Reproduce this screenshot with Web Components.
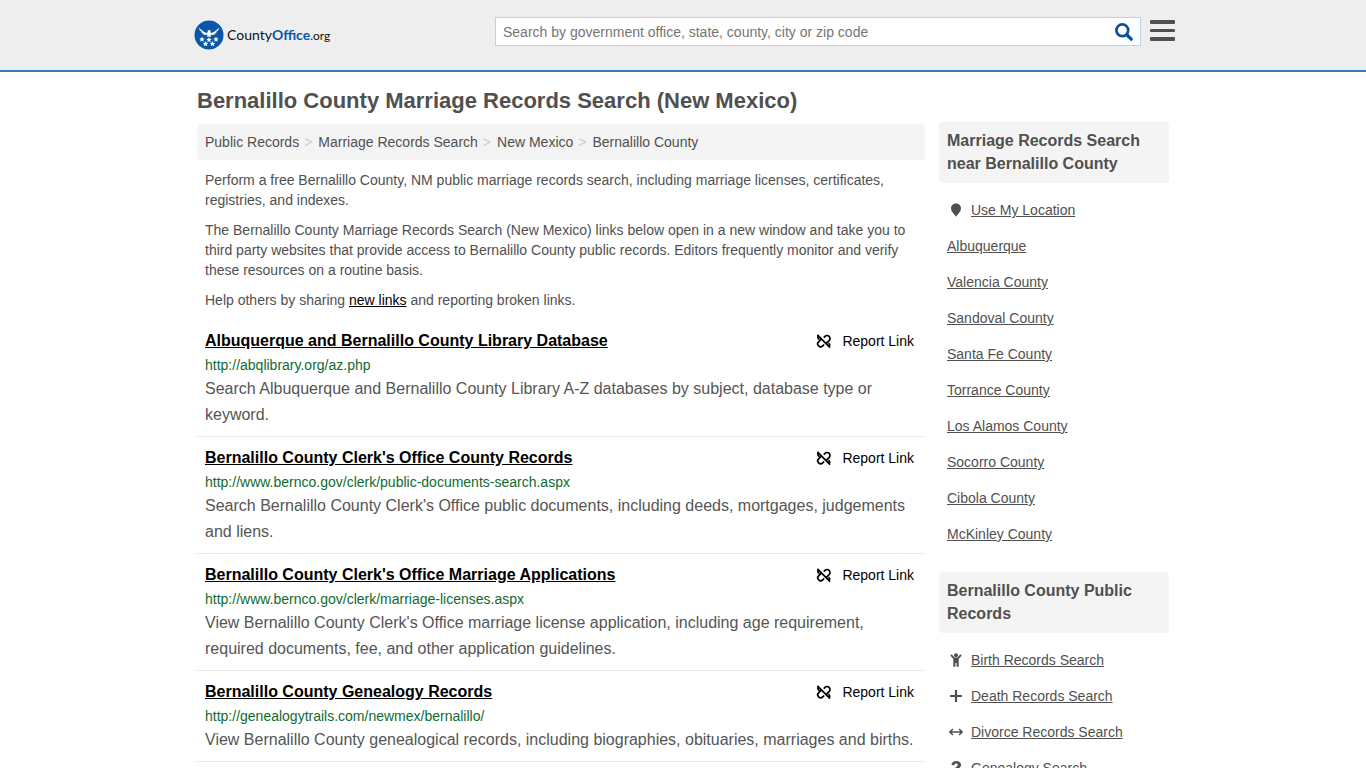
<!DOCTYPE html>
<html lang="en">
<head>
<meta charset="utf-8">
<meta name="viewport" content="width=device-width, initial-scale=1">
<title>Bernalillo County Marriage Records Search (New Mexico)</title>
<style>
    body {
        margin: 0;
        background: #fff;
        color: #505050;
        font: 14px/20px "Liberation Sans", Arial, sans-serif;
    }
</style>
</head>
<body>
<records-page></records-page>

<script>
const ICONS = {
    pin: '<path d="M8 1.500C5.200 1.500 3 3.600 3 6.400 3 9.300 6.200 12 8 14.700 9.800 12 13 9.300 13 6.400 13 3.600 10.800 1.500 8 1.500Z"/>',
    child: '<circle cx="8" cy="3.200" r="2"/><path d="M3.700 2.200 6.500 5.400H9.500L12.300 2.200 13.700 3.400 10.700 7.100V14.700H8.600V11H7.400V14.700H5.300V7.100L2.300 3.400Z"/>',
    plus: '<path d="M6.900 2H9.100V6.900H14V9.100H9.100V14H6.900V9.100H2V6.900H6.900Z"/>',
    arrows: '<path fill="none" stroke="currentColor" stroke-width="1.600" d="M2 8H14M4.900 5 1.900 8 4.900 11M11.100 5 14.100 8 11.100 11"/>',
    question: '<path d="M3.400 5C3.800 2.500 5.600 1 8.300 1 11 1 13 2.700 13 5 13 8 9.700 8.100 9.700 10.300H6.600C6.600 7 9.900 6.900 9.900 5.100 9.900 4.200 9.200 3.600 8.200 3.600 7.200 3.600 6.500 4.200 6.200 5.300Z"/><circle cx="8.100" cy="13.300" r="1.800"/>'
};

class RecordsIcon extends HTMLElement {
    constructor() {
        super();
        this.attachShadow({ mode: 'open' });
    }

    connectedCallback() {
        this.shadowRoot.innerHTML = `
            <style>
                :host {
                    display: block;
                    width: 16px;
                    height: 16px;
                }

                svg {
                    display: block;
                    width: 100%;
                    height: 100%;
                    fill: currentColor;
                }
            </style>
            <svg viewBox="0 0 16 16" aria-hidden="true">${ICONS[this.getAttribute('name')] || ''}</svg>
        `;
    }
}

class SiteLogo extends HTMLElement {
    constructor() {
        super();
        this.attachShadow({ mode: 'open' });
        this.shadowRoot.innerHTML = `
            <style>
                :host {
                    display: block;
                }

                a {
                    display: flex;
                    align-items: center;
                    gap: 3px;
                    height: 30px;
                    color: #111;
                    font: 14px/30px Lato, sans-serif;
                    text-decoration: none;
                }

                svg {
                    width: 30px;
                    height: 30px;
                }

                b {
                    color: #0a56a8;
                    font-weight: 700;
                }

                small {
                    font-size: 12px;
                }
            </style>
            <a href="#">
                <svg viewBox="0 0 60 60" aria-hidden="true">
                    <circle cx="30" cy="30" r="29" fill="#0a56a8"/>
                    <g fill="#fff">
                        <path d="M9 15 19 23 25 26 28 24 27 21 31 20 34 22 32 24 35 26 41 23 51 15 48 21 44 24 46 24 42 27 43 28 38 30 36 30 34 29 33 32 35 34 30 33 25 34 27 32 26 29 24 30 22 30 17 28 18 27 14 24 16 24 12 21Z"/>
                        <path id="star" d="M16 33 17.500 36.500 21.500 37 18.500 39.500 19.500 43.500 16 41.500 12.500 43.500 13.500 39.500 10.500 37 14.500 36.500Z"/>
                        <use href="#star" x="14" y="1"/>
                        <use href="#star" x="28"/>
                        <use href="#star" x="7" y="9"/>
                        <use href="#star" x="21" y="9"/>
                    </g>
                </svg>
                <span>County<b>Office</b><small>.org</small></span>
            </a>
        `;
    }
}

class SiteHeader extends HTMLElement {
    constructor() {
        super();
        this.attachShadow({ mode: 'open' });
        this.shadowRoot.innerHTML = `
            <style>
                :host {
                    display: block;
                    background: #eee;
                    border-bottom: 2px solid #337ab7;
                }

                .bar {
                    display: flex;
                    align-items: flex-start;
                    justify-content: space-between;
                    max-width: 981px;
                    margin: 0 auto;
                    padding: 17px 0 20px 3px;
                }

                site-logo {
                    padding-top: 3px;
                }

                .tools {
                    display: flex;
                    align-items: flex-start;
                    gap: 9px;
                    flex: 0 1 680px;
                }

                form {
                    display: flex;
                    flex: 1;
                    box-sizing: border-box;
                    height: 29px;
                    background: #fff;
                    border: 1px solid #b9d3ea;
                }

                input {
                    flex: 1;
                    min-width: 0;
                    padding: 0 7px;
                    border: 0;
                    background: none;
                    color: #505050;
                    font: inherit;
                    outline: none;
                }

                input::placeholder {
                    color: #757575;
                    opacity: 1;
                }

                button {
                    display: flex;
                    padding: 0;
                    border: 0;
                    background: none;
                    cursor: pointer;
                }

                form button {
                    align-items: center;
                    padding-right: 7px;
                }

                .menu {
                    padding-top: 2px;
                }
            </style>
            <div class="bar">
                <site-logo></site-logo>
                <div class="tools">
                    <form role="search">
                        <input type="text" aria-label="Search" placeholder="Search by government office, state, county, city or zip code">
                        <button type="button" aria-label="Submit search">
                            <svg width="18" height="18" viewBox="0 0 18 18" fill="none" stroke="#0a4f9e" aria-hidden="true">
                                <circle cx="7.300" cy="7.300" r="5.900" stroke-width="2.700"/>
                                <path stroke-width="3.200" stroke-linecap="round" d="M12 12 16.200 16.200"/>
                            </svg>
                        </button>
                    </form>
                    <button class="menu" type="button" aria-label="Menu">
                        <svg width="25" height="23" viewBox="0 0 25 23" fill="#505050" aria-hidden="true">
                            <rect y="1" width="25" height="4" rx="1"/>
                            <rect y="10" width="25" height="3" rx="1"/>
                            <rect y="18" width="25" height="4" rx="1"/>
                        </svg>
                    </button>
                </div>
            </div>
        `;
    }
}

class BreadcrumbTrail extends HTMLElement {
    constructor() {
        super();
        this.attachShadow({ mode: 'open' });
        this.shadowRoot.innerHTML = `
            <style>
                :host {
                    display: block;
                    padding: 8px;
                    background: #f4f4f4;
                    border-radius: 4px;
                }

                nav {
                    display: flex;
                    flex-wrap: wrap;
                }

                ::slotted(a) {
                    color: #505050;
                    text-decoration: none;
                }

                ::slotted(span) {
                    padding: 0 6px 0 5px;
                    color: #ccc;
                }
            </style>
            <nav aria-label="Breadcrumb"><slot></slot></nav>
        `;
    }
}

class RecordLink extends HTMLElement {
    constructor() {
        super();
        this.attachShadow({ mode: 'open' });
    }

    connectedCallback() {
        const url = this.getAttribute('url');
        this.shadowRoot.innerHTML = `
            <style>
                :host {
                    display: block;
                    padding: 9px 8px 8px;
                    border-bottom: 1px solid #e8e8e8;
                }

                .top {
                    display: flex;
                    justify-content: space-between;
                    gap: 16px;
                    line-height: 24px;
                }

                .title {
                    color: #000;
                    font-size: 16px;
                    font-weight: bold;
                }

                .report {
                    display: flex;
                    flex: none;
                    align-items: center;
                    gap: 11px;
                    padding: 0 3px 0 0;
                    border: 0;
                    background: none;
                    color: #000;
                    font: inherit;
                    cursor: pointer;
                }

                .url {
                    padding-top: 1px;
                    color: #0f6b30;
                    line-height: 22px;
                }

                p {
                    margin: 0;
                    color: #555;
                    font-size: 16px;
                    line-height: 26px;
                }
            </style>
            <div class="top">
                <a class="title" href="${url}"><slot name="title"></slot></a>
                <button class="report" type="button">
                    <svg width="15" height="15" viewBox="0 0 16 16" fill="none" stroke="#000" stroke-width="1.800" aria-hidden="true">
                        <path d="M1.500 1 15 14.500M8.300 3.900 9.600 2.600A3.100 3.100 0 0 1 14 7L11.200 9.800M5.800 5.300 2.800 8.300A3.100 3.100 0 0 0 7.200 12.700L8.700 11.200M2.300 2Q1.200 4.300 3.600 6M14.200 13.500Q15.400 11.500 13.300 9.700"/>
                    </svg>
                    Report Link
                </button>
            </div>
            <div class="url">${url}</div>
            <p><slot></slot></p>
        `;
    }
}

class SidePanel extends HTMLElement {
    constructor() {
        super();
        this.attachShadow({ mode: 'open' });
        this.shadowRoot.innerHTML = `
            <style>
                :host {
                    display: block;
                    margin-bottom: 20px;
                }

                h2 {
                    margin: 0 0 9px;
                    padding: 7px 8px 8px;
                    background: #f4f4f4;
                    border-radius: 4px;
                    font-size: 16px;
                    line-height: 23px;
                }
            </style>
            <h2><slot name="heading"></slot></h2>
            <slot></slot>
        `;
    }
}

class SideLink extends HTMLElement {
    constructor() {
        super();
        this.attachShadow({ mode: 'open' });
    }

    connectedCallback() {
        const icon = this.getAttribute('icon');
        this.shadowRoot.innerHTML = `
            <style>
                :host {
                    display: flex;
                    align-items: center;
                    padding: 8px;
                }

                records-icon {
                    margin: 0 7px 0 1px;
                }

                a {
                    color: #505050;
                }
            </style>
            ${icon ? `<records-icon name="${icon}"></records-icon>` : ''}
            <a href="#"><slot></slot></a>
        `;
    }
}

class RecordsPage extends HTMLElement {
    constructor() {
        super();
        this.attachShadow({ mode: 'open' });
        this.shadowRoot.innerHTML = `
            <style>
                :host {
                    display: block;
                }

                .content {
                    max-width: 972px;
                    margin: 0 auto;
                    padding: 17px 4px 0;
                }

                h1 {
                    margin: 0 0 9px;
                    font-size: 22px;
                    line-height: 24px;
                }

                .columns {
                    display: grid;
                    grid-template-columns: minmax(0, 1fr) 230px;
                    gap: 14px;
                    align-items: start;
                }

                main {
                    padding-top: 2px;
                }

                .intro {
                    padding: 0 8px;
                }

                .intro p {
                    margin: 10px 0;
                }

                .intro a {
                    color: #000;
                }
            </style>
            <site-header></site-header>
            <div class="content">
                <h1>Bernalillo County Marriage Records Search (New Mexico)</h1>
                <div class="columns">
                    <main>
                        <breadcrumb-trail>
                            <a href="#">Public Records</a><span>&gt;</span>
                            <a href="#">Marriage Records Search</a><span>&gt;</span>
                            <a href="#">New Mexico</a><span>&gt;</span>
                            <a href="#">Bernalillo County</a>
                        </breadcrumb-trail>
                        <div class="intro">
                            <p>Perform a free Bernalillo County, NM public marriage records search, including marriage licenses, certificates, registries, and indexes.</p>
                            <p>The Bernalillo County Marriage Records Search (New Mexico) links below open in a new window and take you to third party websites that provide access to Bernalillo County public records. Editors frequently monitor and verify these resources on a routine basis.</p>
                            <p>Help others by sharing <a href="#">new links</a> and reporting broken links.</p>
                        </div>
                        <record-link url="http://abqlibrary.org/az.php">
                            <span slot="title">Albuquerque and Bernalillo County Library Database</span>
                            Search Albuquerque and Bernalillo County Library A-Z databases by subject, database type or keyword.
                        </record-link>
                        <record-link url="http://www.bernco.gov/clerk/public-documents-search.aspx">
                            <span slot="title">Bernalillo County Clerk's Office County Records</span>
                            Search Bernalillo County Clerk's Office public documents, including deeds, mortgages, judgements and liens.
                        </record-link>
                        <record-link url="http://www.bernco.gov/clerk/marriage-licenses.aspx">
                            <span slot="title">Bernalillo County Clerk's Office Marriage Applications</span>
                            View Bernalillo County Clerk's Office marriage license application, including age requirement, required documents, fee, and other application guidelines.
                        </record-link>
                        <record-link url="http://genealogytrails.com/newmex/bernalillo/">
                            <span slot="title">Bernalillo County Genealogy Records</span>
                            View Bernalillo County genealogical records, including biographies, obituaries, marriages and births.
                        </record-link>
                    </main>
                    <aside>
                        <side-panel>
                            <span slot="heading">Marriage Records Search near Bernalillo County</span>
                            <side-link icon="pin">Use My Location</side-link>
                            <side-link>Albuquerque</side-link>
                            <side-link>Valencia County</side-link>
                            <side-link>Sandoval County</side-link>
                            <side-link>Santa Fe County</side-link>
                            <side-link>Torrance County</side-link>
                            <side-link>Los Alamos County</side-link>
                            <side-link>Socorro County</side-link>
                            <side-link>Cibola County</side-link>
                            <side-link>McKinley County</side-link>
                        </side-panel>
                        <side-panel>
                            <span slot="heading">Bernalillo County Public Records</span>
                            <side-link icon="child">Birth Records Search</side-link>
                            <side-link icon="plus">Death Records Search</side-link>
                            <side-link icon="arrows">Divorce Records Search</side-link>
                            <side-link icon="question">Genealogy Search</side-link>
                        </side-panel>
                    </aside>
                </div>
            </div>
        `;
    }
}

customElements.define('records-icon', RecordsIcon);
customElements.define('site-logo', SiteLogo);
customElements.define('site-header', SiteHeader);
customElements.define('breadcrumb-trail', BreadcrumbTrail);
customElements.define('record-link', RecordLink);
customElements.define('side-panel', SidePanel);
customElements.define('side-link', SideLink);
customElements.define('records-page', RecordsPage);
</script>
</body>
</html>
